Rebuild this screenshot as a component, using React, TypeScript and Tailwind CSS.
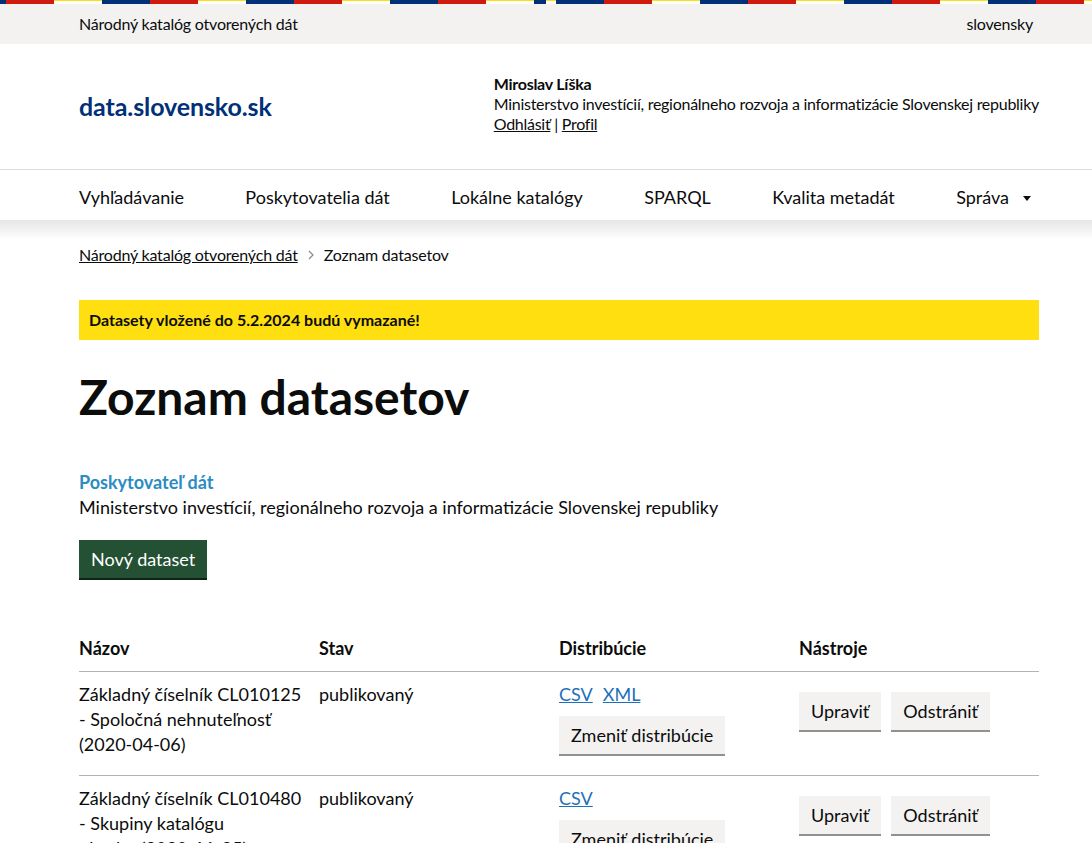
import React from "react";

const navItems = ["Vyhľadávanie", "Poskytovatelia dát", "Lokálne katalógy", "SPARQL", "Kvalita metadát"];

type Row = { name: string[]; status: string; dists: string[] };
const rows: Row[] = [
  {
    name: ["Základný číselník CL010125", "- Spoločná nehnuteľnosť", "(2020-04-06)"],
    status: "publikovaný",
    dists: ["CSV", "XML"],
  },
  {
    name: ["Základný číselník CL010480", "- Skupiny katalógu", "obsahu (2020-11-25)"],
    status: "publikovaný",
    dists: ["CSV"],
  },
];

function GrayButton({ children, className = "" }: { children: React.ReactNode; className?: string }) {
  return (
    <button
      className={
        "bg-[#f3f2f1] text-[#0b0c0c] text-[18px] leading-[25px] px-3 pt-[7px] pb-[6px] border-b-2 border-[#929191] whitespace-nowrap " +
        className
      }
    >
      {children}
    </button>
  );
}

export default function App() {
  return (
    <div className="font-[Lato,'Noto_Sans',sans-serif] text-[#0b0c0c] bg-white min-h-screen">
      {/* Top bar */}
      <div className="bg-[#f3f2f1]">
        <div className="flex h-1">
          <div className="w-1/2 [background:repeating-linear-gradient(90deg,#003078_0_6px,#d0190f_6px_54px,transparent_54px_102px,#003078_102px_144px),linear-gradient(#ffdf0f_0_1px,#fff_1px)]" />
          <div className="w-1/2 [background:repeating-linear-gradient(90deg,transparent_0_10px,#003078_10px_58px,#d0190f_58px_106px,transparent_106px_144px),linear-gradient(#ffdf0f_0_1px,#fff_1px)]" />
        </div>
        <div className="w-[960px] ml-[79px] h-10 flex items-center justify-between text-[16px] tracking-[-0.2px]">
          <span>Národný katalóg otvorených dát</span>
          <span className="mr-[6px]">slovensky</span>
        </div>
      </div>

      {/* Header */}
      <div className="w-[960px] ml-[79px] h-[125px] flex items-center justify-between">
        <div className="text-[25px] font-bold text-[#003078] leading-none tracking-[-0.1px]">data.slovensko.sk</div>
        <div className="text-[16px] leading-5 pb-[5px] tracking-[-0.27px]">
          <div className="font-bold">Miroslav Líška</div>
          <div>Ministerstvo investícií, regionálneho rozvoja a informatizácie Slovenskej republiky</div>
          <div>
            <a className="underline" href="#">Odhlásiť</a> | <a className="underline" href="#">Profil</a>
          </div>
        </div>
      </div>

      {/* Nav */}
      <div className="border-t border-[#dedede]">
        <div className="w-[960px] ml-[79px] h-[50px] pt-[4px] flex items-center justify-between text-[18px]">
          {navItems.map((n) => (
            <span key={n}>{n}</span>
          ))}
          <span className="flex items-center mr-[8px]">
            Správa
            <span className="ml-[14px] mt-[2px] w-0 h-0 border-l-[4px] border-r-[4px] border-t-[5px] border-l-transparent border-r-transparent border-t-[#0b0c0c]" />
          </span>
        </div>
      </div>
      <div className="h-5 bg-gradient-to-b from-[#e6e6e6] to-white" />

      {/* Main */}
      <div className="w-[960px] ml-[79px]">
        <div className="flex items-center text-[16px] leading-5 mt-[5px] tracking-[-0.2px]">
          <a href="#" className="underline">Národný katalóg otvorených dát</a>
          <svg className="mx-[8px]" width="10" height="12" viewBox="0 0 10 12">
            <path d="M3 2 L7 6 L3 10" fill="none" stroke="#8a8a8a" strokeWidth="1.2" />
          </svg>
          <span>Zoznam datasetov</span>
        </div>

        <div className="mt-[35px] bg-[#ffdf0f] h-10 flex items-center px-[10px] text-[16px] font-bold">
          Datasety vložené do 5.2.2024 budú vymazané!
        </div>

        <h1 className="mt-[32px] text-[48px] leading-[50px] font-bold">Zoznam datasetov</h1>

        <div className="mt-[48px] text-[18px] leading-[25px]">
          <div className="font-bold text-[#2b8cc4]">Poskytovateľ dát</div>
          <div>Ministerstvo investícií, regionálneho rozvoja a informatizácie Slovenskej republiky</div>
        </div>

        <button className="mt-[20px] bg-[#245033] text-white text-[18px] leading-[25px] px-3 pt-[7px] pb-[6px] border-b-2 border-[#0e2416]">
          Nový dataset
        </button>

        {/* Table */}
        <table className="mt-[56px] w-full text-[18px] leading-[25px] border-collapse table-fixed">
          <thead>
            <tr className="border-b border-[#b1b4b6] text-left">
              <th className="w-[240px] font-bold pb-[10px] align-top">Názov</th>
              <th className="w-[240px] font-bold pb-[10px] align-top">Stav</th>
              <th className="w-[240px] font-bold pb-[10px] align-top">Distribúcie</th>
              <th className="w-[240px] font-bold pb-[10px] align-top">Nástroje</th>
            </tr>
          </thead>
          <tbody>
            {rows.map((r, i) => (
              <tr key={i} className="border-b border-[#b1b4b6] align-top">
                <td className="pt-[10px] pb-[18px] pr-4">
                  {r.name.map((l, j) => (
                    <div key={j} className="whitespace-nowrap">{l}</div>
                  ))}
                </td>
                <td className="pt-[10px] pb-[18px]">{r.status}</td>
                <td className="pt-[10px] pb-[18px]">
                  <div className="flex gap-[10px]">
                    {r.dists.map((d) => (
                      <a key={d} href="#" className="underline text-[#1d70b8]">{d}</a>
                    ))}
                  </div>
                  <GrayButton className="mt-[9px]">Zmeniť distribúcie</GrayButton>
                </td>
                <td className="pt-[10px] pb-[18px]">
                  <div className="flex gap-[10px] mt-[10px]">
                    <GrayButton>Upraviť</GrayButton>
                    <GrayButton>Odstrániť</GrayButton>
                  </div>
                </td>
              </tr>
            ))}
          </tbody>
        </table>
      </div>
    </div>
  );
}
